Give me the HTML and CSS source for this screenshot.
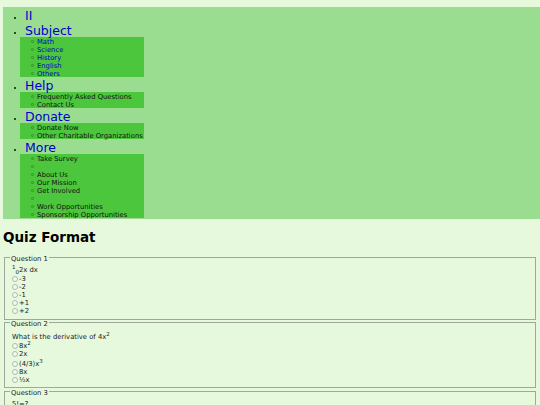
FILE: index.html

```html
<!DOCTYPE html>
<html lang="en">
<head>
    <meta charset="UTF-8">
    <meta name="viewport" content="width=device-width, initial-scale=1.0">
    <title>Quiz Format</title>
    <link rel="stylesheet" href="styles.css">
</head>
<body>
    <ul class="nav">
        <li><a href="#">II</a></li>
        <li><a href="#">Subject</a>
            <ul class="sub">
                <li><a href="#">Math</a></li>
                <li><a href="#">Science</a></li>
                <li><a href="#">History</a></li>
                <li><a href="#">English</a></li>
                <li><a href="#">Others</a></li>
            </ul>
        </li>
        <li><a href="#">Help</a>
            <ul class="sub plain">
                <li><a href="#">Frequently Asked Questions</a></li>
                <li><a href="#">Contact Us</a></li>
            </ul>
        </li>
        <li><a href="#">Donate</a>
            <ul class="sub plain">
                <li><a href="#">Donate Now</a></li>
                <li><a href="#">Other Charitable Organizations</a></li>
            </ul>
        </li>
        <li><a href="#">More</a>
            <ul class="sub plain">
                <li><a href="#">Take Survey</a></li>
                <li></li>
                <li><a href="#">About Us</a></li>
                <li><a href="#">Our Mission</a></li>
                <li><a href="#">Get Involved</a></li>
                <li></li>
                <li><a href="#">Work Opportunities</a></li>
                <li><a href="#">Sponsorship Opportunities</a></li>
            </ul>
        </li>
    </ul>

    <h1>Quiz Format</h1>

    <form>
        <fieldset class="q1">
            <legend>Question 1</legend>
            <div class="ask"><sup>1</sup><sub>0</sub>2x dx</div>
            <label><input type="radio" name="q1">-3</label>
            <label><input type="radio" name="q1">-2</label>
            <label><input type="radio" name="q1">-1</label>
            <label><input type="radio" name="q1">+1</label>
            <label><input type="radio" name="q1">+2</label>
        </fieldset>
        <fieldset class="q2">
            <legend>Question 2</legend>
            <div class="ask">What is the derivative of 4x<sup>2</sup></div>
            <label><input type="radio" name="q2">8x<sup>2</sup></label>
            <label><input type="radio" name="q2">2x</label>
            <label class="tall"><input type="radio" name="q2">(4/3)x<sup>3</sup></label>
            <label><input type="radio" name="q2">8x</label>
            <label><input type="radio" name="q2">½x</label>
        </fieldset>
        <fieldset class="q3">
            <legend>Question 3</legend>
            <div class="ask">5!=?</div>
        </fieldset>
    </form>
</body>
</html>
```

FILE: styles.css

```css
html, body {
    overflow: hidden;
}
body {
    margin: 0;
    padding: 7px 0 0 3px;
    height: 398px;
    background-color: #e6f9dc;
    font-family: Verdana, "DejaVu Sans", sans-serif;
    font-size: 6.8px;
    line-height: 8px;
    color: #222;
}
a {
    text-decoration: none;
}
.nav {
    margin: 0;
    padding: 0 0 0 22px;
    background-color: #9bdd90;
    list-style: disc;
    height: 212px;
}
.nav > li {
    font-size: 12.5px;
}
.nav > li::marker {
    font-size: 7px;
    color: #111;
}
.nav > li > a {
    display: block;
    height: 15px;
    line-height: 17px;
    color: #0000cc;
}
.sub {
    margin: 0 0 0 -5px;
    padding: 0 0 0 17px;
    width: 107px;
    background-color: #4cc63c;
    list-style: none;
    font-size: 6.8px;
}
.sub li {
    height: 8px;
    line-height: 10px;
    white-space: nowrap;
}
.sub li::before {
    content: "";
    display: inline-block;
    box-sizing: border-box;
    width: 3px;
    height: 3px;
    margin: 0 3px 0 -6px;
    border: 1px solid #2f8f26;
    border-radius: 50%;
    vertical-align: 1px;
}
.sub a {
    color: #0000cc;
}
.plain a {
    color: #111;
}
h1 {
    margin: 10px 0 0 0;
    font-size: 13.5px;
    line-height: 17px;
    font-weight: bold;
    color: #000;
}
form {
    margin: 10px 1px 0 1px;
    width: 532px;
}
fieldset {
    margin: -5px 0 0 0;
    padding: 0 0 4px 7px;
    border: 1px solid #a0a89c;
}
.q1 {
    margin-bottom: 1px;
}
.q2 {
    margin-bottom: 2px;
    padding-bottom: 3px;
}
legend {
    padding: 4px 1px 0 1px;
    margin-left: -2px;
    line-height: 8px;
}
.ask {
    margin: 3px 0 0 0;
    line-height: 9px;
}
.q2 .ask {
    margin-top: 5px;
}
.q3 .ask {
    margin-top: 3px;
}
label {
    display: block;
    height: 8px;
    line-height: 8px;
}
.tall {
    margin-top: 2px;
}
input {
    appearance: none;
    box-sizing: border-box;
    width: 6px;
    height: 6px;
    margin: 0 1px 0 0;
    border: 1px solid #b4bab0;
    border-radius: 50%;
    background-color: #f2f8ee;
    vertical-align: -1px;
}
sup, sub {
    font-size: 5.5px;
    line-height: 0;
}
```
